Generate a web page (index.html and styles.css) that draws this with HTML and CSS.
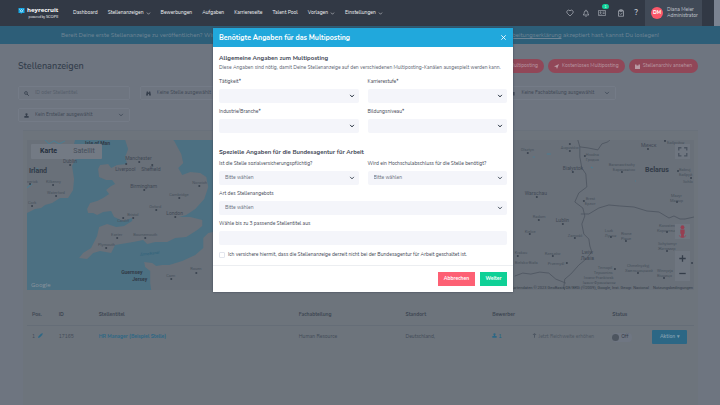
FILE: index.html
```html
<!DOCTYPE html>
<html lang="de">
<head>
<meta charset="utf-8">
<meta name="viewport" content="width=device-width, initial-scale=1">
<title>Stellenanzeigen</title>
<link rel="stylesheet" href="styles.css">
</head>
<body>
<svg class="defs" aria-hidden="true">
  <symbol id="chev" viewBox="0 0 8 8"><path d="M1.5 2.5 4 5.2 6.500 2.500" fill="none" stroke="currentColor" stroke-width="1.300"/></symbol>
  <symbol id="person" viewBox="0 0 10 10"><circle cx="5" cy="2.600" r="2.300"/><path d="M3.800 4h2.400v2H9.300v3.500H.7V6h3.100z"/></symbol>
</svg>
<header class="topbar">
  <a class="logo" href="#" aria-label="heyrecruit">
    <svg class="logo-mark" viewBox="0 0 14 14"><path d="M1 1h12v10H8l-2 2-1-2H1z" fill="#18a9e6"/><path d="M3 4l2 2 2-2 2 2 2-2M4.500 7.500q2.500 2 5 0" fill="none" stroke="#fff" stroke-width="1.300"/></svg>
    <span class="logo-text"><b>heyrecruit</b><small>powered by <i>SCOPE</i></small></span>
  </a>
  <nav class="nav">
    <a href="#">Dashboard</a>
    <a href="#">Stellenanzeigen <svg class="chev"><use href="#chev"/></svg></a>
    <a href="#">Bewerbungen</a>
    <a href="#">Aufgaben</a>
    <a href="#">Karriereseite</a>
    <a href="#">Talent Pool</a>
    <a href="#">Vorlagen <svg class="chev"><use href="#chev"/></svg></a>
    <a href="#">Einstellungen <svg class="chev"><use href="#chev"/></svg></a>
  </nav>
  <div class="tools">
    <button aria-label="Favoriten"><svg viewBox="0 0 16 16"><path d="M8 14 2.500 8.500a3.600 3.600 0 0 1 5.500-5 3.600 3.600 0 0 1 5.500 5z"/></svg></button>
    <button aria-label="Mitteilungen"><svg viewBox="0 0 16 16"><path d="M2.500 12q2-2 2-5a3.500 3.500 0 0 1 7 0q0 3 2 5zM6.500 14.500h3M8 1.500v2"/></svg></button>
    <button class="cards" aria-label="Bewerber"><svg viewBox="0 0 18 16"><path d="M1 2.500h16v11H1zM10.500 6h4.500M10.500 9h4.500M3.500 11q2-3 4.500 0"/><circle cx="5.800" cy="6.500" r="1.300"/></svg><span class="badge">1</span></button>
    <button aria-label="Aufgaben"><svg viewBox="0 0 16 16"><path d="M3 3.500h10v11H3zM5.500 1.500h5v3h-5zM5.500 9l2 2 3.500-3.500"/></svg></button>
    <button class="help" aria-label="Hilfe">?</button>
  </div>
  <div class="user"><span class="avatar">DM</span><span>Diana Meier<br>Administrator</span></div>
  <div class="rail"></div>
</header>
<p class="banner"><span>Bereit Deine erste Stellenanzeige zu veröffentlichen? Wir</span><span><a href="#">Datenverarbeitungserklärung</a> akzeptiert hast, kannst Du loslegen!</span></p>

<main class="page">
  <div class="heading">
    <h1>Stellenanzeigen</h1>
    <div class="pills">
      <button>Multiposting</button>
      <button><svg viewBox="0 0 10 10"><path d="M0 5 10 0 6 10 4.500 6z"/></svg>Kostenloses Multiposting</button>
      <button><svg viewBox="0 0 10 10"><path d="M0 1h3v2h4V1h3v9H0z"/></svg>Stellenarchiv ansehen</button>
    </div>
  </div>
  <form class="filters">
    <label class="filter"><svg class="ficon" viewBox="0 0 10 10"><circle cx="4" cy="4" r="2.800" fill="none" stroke="currentColor" stroke-width="1.500"/><path d="m6 6 3.500 3.500" stroke="currentColor" stroke-width="1.800"/></svg><input type="text" placeholder="ID oder Stellentitel" aria-label="ID oder Stellentitel"></label>
    <label class="filter"><svg class="ficon" viewBox="0 0 10 10"><path d="M1.500 1h2.500v2h2V1h2.500L10 9H6V6H4v3H0z"/></svg><select aria-label="Stelle"><option>Keine Stelle ausgewählt</option></select><svg class="arrow"><use href="#chev"/></svg></label>
    <label class="filter last"><svg class="ficon" viewBox="0 0 10 10"><path d="M1 2h8v7H1z"/></svg><select aria-label="Fachabteilung"><option>Keine Fachabteilung ausgewählt</option></select><svg class="arrow"><use href="#chev"/></svg></label>
    <label class="filter first"><svg class="ficon"><use href="#person"/></svg><select aria-label="Ersteller"><option>Kein Ersteller ausgewählt</option></select><svg class="arrow"><use href="#chev"/></svg></label>
  </form>
  <section class="card">
    <div class="map">
      <svg class="map-art" viewBox="27 140 666 150" preserveAspectRatio="xMidYMid slice">
        <path class="sea" d="M27 140h190v150H27z"/>
        <g class="land">
          <path d="M27 140h48l-2 8 3 10-4 8 2 13-1 11-5 8-8 0-8 5-7 2-4 3-6 1-8 4z"/>
          <path d="M125 140l3 9-3 8 2 7-10 1-6 3-3-4-8 1-2 4 1 8 7 3 6 0 3 4-4 2-5 4 3 4-6 4-6 3-7 2-3 6 1 4 5 0 4 2 6-3 8-1 3 6 9 4 9-3 0 3-8 5-8 1-9-3-8 3-2 9-6 12-8 5-4 5 8 1 6-6 7-2 11 2 4-8 18-3 10-2 4 4 8-2 12 0 8-4 11-1 11-7 5-4 0-6-12-3-11 0 7-2 9-6 9-10 4-12-2-10-6-4-10-1-8 3-4-7 5-5-2-9-7-13-11-9z"/>
          <path d="M217 231l-9 2-5 5v10l-8 7-13 6-13 4-7 0-6 1-4-3-8-1 1 5 5 4 0 12 1 7h66z"/>
        </g>
        <path class="river" d="M45 140l4 4 5-3 5 3 6-3M27 188l5-4M34 172l4-4"/>
        <g class="border">
          <path d="M577 140l2 7 0 10 2 11 4 6 1 13-8 6-4 9 8 6 2 8-3 8 2 10 5 5 1 7 2 6-7 8-6 5-8 9-6 5-1 8 2 7M579 147l8 1 10 2 4-6 6-2 2-2M580 214l8 0 10-6 10-3 11 1 14 1 13 4 12 1 10 6 5-2 6 3 5 0 9-2 6 4 6-2 5 0M514 276l8-3 8 1 9-2 9 1 7 6 10 4"/>
        </g>
        <path class="river" d="M546 154h4M532 157h2M590 167l2 1M634 181h1"/>
        <g class="town big"><text x="29" y="173">Irland</text><text x="85" y="145" class="six">Isle of Man</text><text x="121" y="274" class="six">Guernsey</text><text x="132" y="281" class="six">Jersey</text><text x="644" y="172">Belarus</text></g>
        <g class="town mid"><text x="63" y="163">Dublin</text><text x="125" y="160">Manchester</text><text x="115" y="171">Liverpool</text><text x="141" y="171">Sheffield</text><text x="130" y="188">Birmingham</text><text x="166" y="215">London</text><text x="562" y="170">Białystok</text><text x="524" y="195">Warschau</text><text x="555" y="222">Lublin</text><text x="640" y="147">Минск</text><text x="581" y="254">Lwiw</text><text x="580" y="260">Львів</text></g>
        <g class="town small"><text x="46" y="183">Kilkenny</text><text x="47" y="194">Waterford</text><text x="28" y="204">Cork</text><text x="27" y="183">nerick</text><text x="192" y="184">Norwich</text><text x="169" y="196">Cambridge</text><text x="149" y="208">Oxford</text><text x="127" y="216">Bristol</text><text x="117" y="222">Cardiff</text><text x="111" y="236">Exeter</text><text x="133" y="236">Bournemouth</text><text x="98" y="246">Plymouth</text><text x="190" y="270">Rouen</text><text x="166" y="277">Caen</text><text x="520" y="151">Olsztyn</text><text x="560" y="149">Augustów</text><text x="585" y="156">Hrodna</text><text x="585" y="161">Гродна</text><text x="608" y="166">Baranawitschy</text><text x="612" y="171">Баранавічы</text><text x="666" y="144">Бабруйск</text><text x="678" y="171">Babruj</text><text x="678" y="176">Бабруй</text><text x="682" y="183">Schlo</text><text x="670" y="197">Mazyr</text><text x="669" y="202">Мазыр</text><text x="585" y="200">Brest</text><text x="584" y="205">Брэст</text><text x="532" y="218">Radom</text><text x="524" y="233">Kielce</text><text x="567" y="237">Zamość</text><text x="604" y="232">Luzk</text><text x="604" y="237">Луцьк</text><text x="620" y="235">Riwne</text><text x="620" y="240">Рівне</text><text x="658" y="227">Korosten</text><text x="656" y="232">Коростень</text><text x="657" y="245">Schytomyr</text><text x="657" y="250">Житомир</text><text x="514" y="254">Krakau</text><text x="544" y="255">Rzeszów</text><text x="547" y="265">Przemyśl</text><text x="514" y="264">Bielsko-Biała</text><text x="597" y="269">Ternopil</text><text x="593" y="274">Тернопіль</text><text x="626" y="267">Chmelnyzkyj</text><text x="624" y="272">Хмельницький</text><text x="656" y="272">Winnyzja</text><text x="656" y="277">Вінниця</text><text x="583" y="279">Iwano-Frankiwsk</text><text x="582" y="284">Івано-Франківськ</text></g>
        <path class="dots" d="M70 165h.1M139 162h.1M126 164h.1M152 165h.1M144 190h.1M175 217h.1M53 185h.1M56 196h.1M32 206h.1M30 184h.1M199 186h.1M179 198h.1M156 210h.1M133 218h.1M123 218h.1M117 238h.1M145 238h.1M106 248h.1M196 273h.1M171 279h.1M527 153h.1M569 144h.1M569 151h.1M584 156h.1M572 172h.1M621 172h.1M647 149h.1M664 141h.1M677 171h.1M690 178h.1M676 202h.1M583 201h.1M536 197h.1M538 220h.1M562 224h.1M529 234h.1M574 238h.1M610 237h.1M625 241h.1M666 232h.1M666 251h.1M552 256h.1M517 256h.1M566 263h.1M614 269h.1M637 273h.1M663 278h.1M691 263h.1"/>
        <text class="channel" x="140" y="256" transform="rotate(-7 140 256)">Ärmelkanal</text>
      </svg>
      <div class="map-type"><button class="on">Karte</button><button>Satellit</button></div>
      <span class="google">Google</span>
      <div class="map-tools">
        <button class="full" aria-label="Vollbild"><svg viewBox="0 0 14 14"><path d="M3.500 6V3.500H6M8.500 3.500H11V6M11 8.500V11H8.500M6 11H3.500V8.500" class="line"/></svg></button>
        <button class="pegman" aria-label="Street View"><svg viewBox="0 0 14 14"><circle cx="7" cy="3" r="1.800"/><path d="M5 5.200h4V9H8.300v3.500H5.700V9H5z"/><path d="M4 10.500q0 2 3 2t3-2" fill="none" stroke="currentColor" stroke-width=".6"/></svg></button>
        <button aria-label="Vergrößern"><svg viewBox="0 0 14 14"><path d="M7 4v6M4 7h6" class="line"/></svg></button>
        <button aria-label="Verkleinern"><svg viewBox="0 0 14 14"><path d="M4 7h6" class="line"/></svg></button>
      </div>
      <div class="credits"><span>Kartendaten © 2023 GeoBasis-DE/BKG (©2009), Google, Inst. Geogr. Nacional</span><span>Nutzungsbedingungen</span></div>
    </div>
    <table>
      <colgroup><col class="c1"><col class="c2"><col class="c3"><col class="c4"><col class="c5"><col class="c6"><col class="c7"><col class="c8"><col class="c9"></colgroup>
      <thead><tr><th>Pos.</th><th>ID</th><th>Stellentitel</th><th>Fachabteilung</th><th>Standort</th><th colspan="2">Bewerber</th><th>Status</th><th></th></tr></thead>
      <tbody><tr>
        <td>1 &nbsp;<svg class="tiny blue" viewBox="0 0 10 10"><path d="M0 10 1 6.500 6.500 1 9 3.500 3.500 9zM7 .5 8 0l2 2-.5 1z"/></svg></td>
        <td>17165</td>
        <td><a class="job" href="#">HR Manager (Beispiel Stelle)</a></td>
        <td>Human Resource</td>
        <td>Deutschland,</td>
        <td class="blue"><svg class="tiny"><use href="#person"/></svg> <b>1</b></td>
        <td class="faint"><svg class="tiny" viewBox="0 0 10 10"><path d="M5 0 9 4H6v5.500H4V4H1z"/></svg> Jetzt Reichweite erhöhen</td>
        <td><button class="toggle"><i></i>Off</button></td>
        <td><button class="action">Aktion ▾</button></td>
      </tr></tbody>
    </table>
  </section>
</main>

<div class="overlay">
  <form class="modal" role="dialog" aria-labelledby="mt">
    <header class="modal-head"><h2 id="mt">Benötigte Angaben für das Multiposting</h2><button type="button" aria-label="Schließen"><svg viewBox="0 0 8 8"><path d="m1.500 1.500 5 5m0-5-5 5"/></svg></button></header>
    <div class="modal-body">
      <h3>Allgemeine Angaben zum Multiposting</h3>
      <p>Diese Angaben sind nötig, damit Deine Stellenanzeige auf den verschiedenen Multiposting-Kanälen ausgespielt werden kann.</p>
      <div class="fields">
        <div class="field"><label for="f1">Tätigkeit*</label><div class="pick"><select id="f1"><option></option></select><svg class="arrow dark"><use href="#chev"/></svg></div></div>
        <div class="field"><label for="f2">Karrierestufe*</label><div class="pick"><select id="f2"><option></option></select><svg class="arrow dark"><use href="#chev"/></svg></div></div>
        <div class="field"><label for="f3">Industrie/Branche*</label><div class="pick"><select id="f3"><option></option></select><svg class="arrow dark"><use href="#chev"/></svg></div></div>
        <div class="field"><label for="f4">Bildungsniveau*</label><div class="pick"><select id="f4"><option></option></select><svg class="arrow dark"><use href="#chev"/></svg></div></div>
      </div>
      <h3 class="second">Spezielle Angaben für die Bundesagentur für Arbeit</h3>
      <div class="fields">
        <div class="field"><label for="f5">Ist die Stelle sozialversicherungspflichtig?</label><div class="pick"><select id="f5"><option>Bitte wählen</option></select><svg class="arrow"><use href="#chev"/></svg></div></div>
        <div class="field"><label for="f6">Wird ein Hochschulabschluss für die Stelle benötigt?</label><div class="pick"><select id="f6"><option>Bitte wählen</option></select><svg class="arrow"><use href="#chev"/></svg></div></div>
        <div class="field wide"><label for="f7">Art des Stellenangebots</label><div class="pick"><select id="f7"><option>Bitte wählen</option></select><svg class="arrow"><use href="#chev"/></svg></div></div>
        <div class="field wide"><label for="f8">Wähle bis zu 3 passende Stellentitel aus</label><div class="pick"><input id="f8" type="text"></div></div>
      </div>
      <label class="check"><input type="checkbox">Ich versichere hiermit, dass die Stellenanzeige derzeit nicht bei der Bundesagentur für Arbeit geschaltet ist.</label>
    </div>
    <footer class="modal-foot"><button type="button" class="cancel">Abbrechen</button><button type="button" class="next">Weiter</button></footer>
  </form>
</div>
</body>
</html>
```

FILE: styles.css
```css
* { box-sizing: border-box; }
body { margin: 0; min-height: 100vh; background: #6e7580; color: #3b4554; font: 5px/8px Nunito, Lato, "Open Sans", sans-serif; position: relative; }
h1, h2, h3, p { margin: 0; }
button, input, select { font: inherit; color: inherit; border: 0; padding: 0; background: none; margin: 0; appearance: none; }
a { color: inherit; text-decoration: none; }
svg { display: block; fill: currentColor; }
.defs { position: absolute; width: 0; height: 0; }

.topbar { height: 26px; background: #323945; color: #f0f2f4; display: flex; align-items: center; padding-left: 18px; }
.logo { display: flex; width: 55px; gap: 2px; align-items: flex-start; }
.logo-mark { width: 7px; height: 8px; }
.logo-text { display: flex; flex-direction: column; align-items: flex-end; color: #fff; }
.logo-text b { font: bold 6px/7px "Open Sans", sans-serif; }
.logo-text small { font: 3px/5px "Open Sans", sans-serif; }
.logo-text i { font: 4px/5px "Open Sans", sans-serif; }
.nav { display: flex; gap: 10px; flex: 1; white-space: nowrap; }
.nav a { display: flex; align-items: center; gap: 2px; }
.chev { width: 5px; height: 5px; opacity: .6; }
.tools { display: flex; align-items: center; gap: 8px; margin-right: 6px; color: #b9bec6; }
.tools svg { width: 8px; height: 8px; fill: none; stroke: currentColor; stroke-width: 1.3; }
.tools .cards { position: relative; margin-right: 3px; }
.badge { position: absolute; left: 4px; top: -5px; width: 7px; height: 5px; border-radius: 3px; background: #10cf98; color: #fff; font-size: 4px; line-height: 5px; }
.help { width: 6px; font-size: 8px; font-weight: bold; }
.user { display: flex; align-items: center; gap: 4px; align-self: stretch; width: 57px; padding-left: 6px; background: #414a57; color: #c3c8cf; line-height: 6px; }
.avatar { width: 12px; height: 12px; border-radius: 50%; background: #fb5769; color: #fff; font-weight: bold; text-align: center; line-height: 12px; }
.rail { align-self: stretch; width: 18px; border-right: 6px solid #7b8391; }
.banner { height: 18px; padding: 0 61px; background: #2d5e78; color: #6e8494; display: flex; justify-content: space-between; align-items: center; font-size: 6px; }
.banner a { text-decoration: underline; }

.page { padding: 15px 22px 0 18px; }
.heading { display: flex; justify-content: space-between; align-items: center; height: 14px; }
h1 { font-size: 9px; line-height: 14px; font-weight: 600; color: #343e4c; }
.pills { display: flex; gap: 4px; }
.pills button { height: 14px; padding: 0 6px; border-radius: 7px; background: #914758; color: #b99aa4; display: flex; align-items: center; gap: 3px; }
.pills svg { width: 5px; height: 5px; }
.filters { display: grid; grid-template-columns: repeat(5, 1fr); gap: 8px 10px; margin: 13px 82px 0 0; }
.filter { display: flex; align-items: center; gap: 6px; height: 14px; padding: 0 5px; border: 1px solid #747b87; border-radius: 2px; }
.filter input, .filter select { flex: 1; min-width: 0; color: #3f4855; }
.filter input::placeholder { color: #555d6a; }
.ficon { width: 5px; height: 5px; color: #363f4c; }
.last { grid-column: 5; }
.first { grid-column: 1; }
.arrow { width: 6px; height: 6px; color: #46505e; flex: none; }
.card { margin: 8px 0 0 5px; padding: 9px 4px 0; border-top: 1px solid #69717b; background: #6d747c; min-height: 275px; }

.map { position: relative; height: 150px; background: #697079; overflow: hidden; }
.map-art { width: 100%; height: 150px; font-family: Roboto, sans-serif; }
.sea { fill: #4c7082; }
.land { fill: #697079; }
.river { fill: none; stroke: #4c7d91; }
.border { fill: none; stroke: #4c545f; stroke-width: .8; stroke-linejoin: round; }
.town { fill: #414955; }
.big { font-size: 7px; font-weight: bold; fill: #323b48; }
.big .six { font-size: 5px; }
.mid { font-size: 5px; }
.small { font-size: 4px; fill: #48505c; }
.channel { font-size: 4px; font-style: italic; fill: #2f627b; }
.dots { stroke: #3b4450; stroke-width: 2; stroke-linecap: round; }
.map-type { position: absolute; left: 4px; top: 4px; display: flex; background: #737a84; border-radius: 1px; }
.map-type button { width: 36px; height: 15px; font: 7px/15px Roboto, sans-serif; color: #454e5a; }
.map-type .on { width: 35px; font-weight: bold; color: #252f3d; }
.google { position: absolute; left: 4px; bottom: 1px; font: 6px/8px "Open Sans", sans-serif; color: #8b949e; }
.map-tools { position: absolute; right: 4px; top: 4px; display: flex; flex-direction: column; color: #343d49; }
.map-tools button { width: 15px; height: 15px; background: #6f7680; }
.map-tools .full { color: #4a535f; }
.map-tools svg { width: 15px; height: 15px; }
.map-tools .pegman { margin: 65px 0 12px; color: #963f51; }
.line { fill: none; stroke: currentColor; stroke-width: 1.2; }
.credits { position: absolute; right: 1px; bottom: 0; display: flex; gap: 4px; font: 4px/5px Roboto, sans-serif; color: #353e4a; white-space: nowrap; }

table { width: 100%; table-layout: fixed; border-collapse: collapse; margin-top: 15px; color: #424b57; white-space: nowrap; }
th, td { padding: 0 0 0 5px; text-align: left; }
th { height: 20px; font-weight: bold; border-bottom: 1px solid #656d77; color: #3e4753; }
td { height: 24px; }
.c1 { width: 4%; } .c2 { width: 6%; } .c3 { width: 30%; } .c4 { width: 16%; } .c5 { width: 13%; }
.c6 { width: 6%; } .c7 { width: 12%; } .c8 { width: 6%; } .c9 { width: 7%; }
.tiny { display: inline-block; width: 5px; height: 5px; }
.blue, .job { color: #2c6785; }
.job { font-weight: bold; }
.faint { color: #4e5763; }
.toggle { display: flex; align-items: center; gap: 2px; height: 9px; width: 20px; border-radius: 4px; background: #6f7682; color: #303946; }
.toggle i { width: 7px; height: 7px; border-radius: 50%; background: #4d555f; }
.action { width: 35px; height: 14px; border-radius: 1px; background: #2c6785; color: #7d9dae; font-weight: bold; }

.overlay { position: absolute; inset: 28px 0 0 6px; display: flex; justify-content: center; align-items: flex-start; }
.modal { width: 42%; min-width: 300px; background: #fff; box-shadow: 0 0 2px #3c4654; color: #3f4856; }
.modal-head { height: 19px; padding: 0 6px; display: flex; align-items: center; justify-content: space-between; background: #21a8dc; color: #fff; }
.modal-head h2 { font-size: 7px; font-weight: bold; }
.modal-head svg { width: 7px; height: 7px; stroke: currentColor; }
.modal-body { padding: 7px 6px 6px; }
h3 { font-size: 6px; line-height: 8px; font-weight: bold; }
.modal-body p { margin: 2px 0 6px; color: #5a6370; white-space: nowrap; }
.fields { display: grid; grid-template-columns: 1fr 1fr; gap: 5px 9px; }
.field { display: flex; flex-direction: column; gap: 3px; }
.wide { grid-column: 1 / -1; }
.pick { display: flex; align-items: center; height: 14px; padding-right: 4px; background: #f4f5fa; border-radius: 2px; }
.pick select, .pick input { flex: 1; height: 14px; padding-left: 6px; color: #68707c; }
.dark { color: #202a38; }
.second { margin: 15px 0 4px; }
.check { display: flex; align-items: center; gap: 3px; margin-top: 6px; white-space: nowrap; }
.check input { width: 6px; height: 6px; border: 1px solid #e3e6ee; border-radius: 1px; }
.modal-foot { display: flex; justify-content: flex-end; gap: 5px; padding: 6px; border-top: 1px solid #eceef1; color: #fff; font-weight: bold; }
.modal-foot button { height: 14px; }
.cancel { width: 37px; background: #fd6074; }
.next { width: 27px; background: #0fd096; }
```
